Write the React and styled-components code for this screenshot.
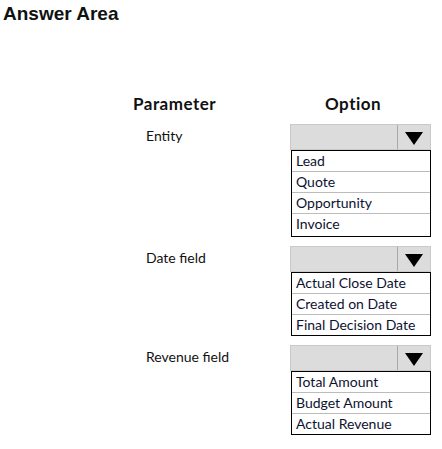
import React from "react";
import styled, { createGlobalStyle } from "styled-components";

const sections = [
  { label: "Entity", options: ["Lead", "Quote", "Opportunity", "Invoice"], extra: 2 },
  { label: "Date field", options: ["Actual Close Date", "Created on Date", "Final Decision Date"] },
  { label: "Revenue field", options: ["Total Amount", "Budget Amount", "Actual Revenue"] },
];

function Dropdown({ options, extra }) {
  return (
    <OptionCol>
      <Select>
        <SelectValue />
        <SelectArrow>
          <svg width="18" height="13" viewBox="0 0 18 13">
            <polygon points="0,0 18,0 9,13" fill="#000" />
          </svg>
        </SelectArrow>
      </Select>
      <List $extra={extra}>
        {options.map((o) => (
          <Item key={o}>{o}</Item>
        ))}
      </List>
    </OptionCol>
  );
}

export default function App() {
  return (
    <>
      <GlobalStyle />
      <Page>
        <Title>Answer Area</Title>
        <Table>
          <HeadRow>
            <HeadCell>Parameter</HeadCell>
            <HeadCell $option>Option</HeadCell>
          </HeadRow>
          {sections.map((s) => (
            <Row key={s.label}>
              <Label>{s.label}</Label>
              <Dropdown options={s.options} extra={s.extra} />
            </Row>
          ))}
        </Table>
      </Page>
    </>
  );
}

const GlobalStyle = createGlobalStyle`
  body {
    margin: 0;
    background: #fff;
    font-family: Lato, "Open Sans", sans-serif;
    color: #111;
  }
`;

const Page = styled.div`
  width: 442px;
  height: 449px;
  overflow: hidden;
`;

const Title = styled.div`
  font-family: "Liberation Sans", Arial, sans-serif;
  font-weight: 700;
  font-size: 19px;
  line-height: 22px;
  padding: 3px 0 0 3px;
`;

const Table = styled.div`
  display: flex;
  flex-direction: column;
  margin: 67px 0 0 133px;
  gap: 9px;
`;

const HeadRow = styled.div`
  display: grid;
  grid-template-columns: 157px 141px;
  height: 23px;
  align-items: center;
`;

const HeadCell = styled.div`
  font-weight: 700;
  font-size: 17px;
  letter-spacing: 0.5px;
  padding-left: ${(p) => (p.$option ? "35px" : "0")};
`;

const Row = styled.div`
  display: grid;
  grid-template-columns: 157px 141px;
  align-items: start;
`;

const Label = styled.div`
  font-size: 14px;
  line-height: 18px;
  padding: 3px 0 0 13px;
`;

const OptionCol = styled.div`
  display: flex;
  flex-direction: column;
`;

const Select = styled.div`
  display: flex;
  height: 26px;
  box-sizing: border-box;
  background: #dcdcdc;
  border: 1px solid #c9c9c9;
`;

const SelectValue = styled.div`
  flex: 1;
  border-right: 1px solid #a8a8a8;
`;

const SelectArrow = styled.div`
  width: 32px;
  display: flex;
  align-items: center;
  justify-content: center;
  padding-top: 2px;
  box-sizing: border-box;
`;

const List = styled.div`
  margin-left: 1px;
  border: 1px solid #000;
  padding-bottom: ${(p) => p.$extra || 0}px;
  background: #fff;
`;

const Item = styled.div`
  height: 20px;
  line-height: 20px;
  font-size: 14px;
  padding-left: 4px;
  color: #0e1230;
  & + & {
    border-top: 1px solid #bcbcbc;
  }
`;
